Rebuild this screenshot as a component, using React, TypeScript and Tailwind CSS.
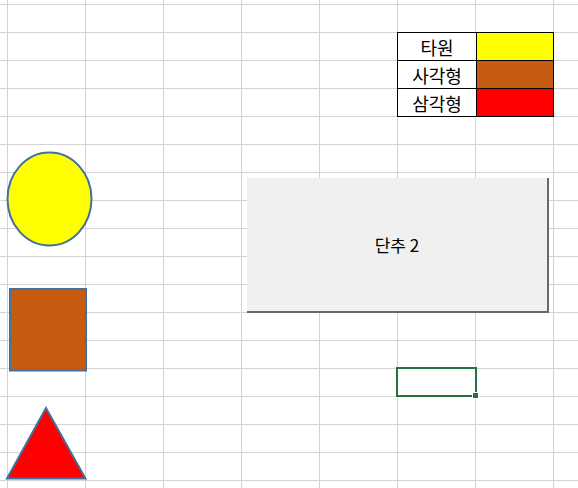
import React from "react";

const colWidths = [8, 78, 78, 78, 78, 78, 78, 78, 30];
const rowHeights = [5, ...Array(18).fill(28)];

export default function App() {
  return (
    <div className="relative w-[578px] h-[488px] overflow-hidden bg-white" style={{ fontFamily: '"Noto Sans CJK KR", "Noto Sans", sans-serif' }}>
      <div
        className="grid"
        style={{
          gridTemplateColumns: colWidths.map((w) => `${w}px`).join(" "),
          gridTemplateRows: rowHeights.map((h) => `${h}px`).join(" "),
        }}
      >
        {rowHeights.map((_, r) =>
          colWidths.map((_, c) => (
            <div key={`${r}-${c}`} className="border-r border-b border-[#d4d4d4]" />
          ))
        )}
      </div>

      {/* legend table */}
      <div className="absolute left-[397px] top-[32px] grid grid-cols-[79px_77px] border-t border-l border-black">
        {[
          ["타원", "bg-[#ffff00]"],
          ["사각형", "bg-[#c55a11]"],
          ["삼각형", "bg-[#ff0000]"],
        ].map(([label, bg]) => (
          <React.Fragment key={label}>
            <div className="h-[28px] bg-white border-r border-b border-black flex items-center justify-center text-[18px] leading-none text-black">
              {label}
            </div>
            <div className={`h-[28px] border-r border-b border-black ${bg}`} />
          </React.Fragment>
        ))}
      </div>

      {/* shapes */}
      <svg className="absolute left-0 top-0" width="578" height="488">
        <ellipse cx="49.5" cy="199" rx="42" ry="46.5" fill="#ffff00" stroke="#41719c" strokeWidth="2" />
        <rect x="10" y="289" width="76" height="81.5" fill="#c55a11" stroke="#41719c" strokeWidth="2" />
        <polygon points="46,408 7,478.5 85.5,478.5" fill="#ff0000" stroke="#41719c" strokeWidth="2" />
      </svg>

      {/* button */}
      <div className="absolute left-[247px] top-[178px] w-[302px] h-[135px] bg-[#f0f0f0] border-r-2 border-b-2 border-[#696969] flex items-center justify-center">
        <span className="text-[17px] text-black leading-none">단추 2</span>
      </div>

      {/* selected cell */}
      <div className="absolute left-[396px] top-[367px] w-[81px] h-[30px] border-2 border-[#217346]">
        <div className="absolute right-[-4px] bottom-[-4px] w-[7px] h-[7px] bg-[#217346] border border-white" />
      </div>
    </div>
  );
}
